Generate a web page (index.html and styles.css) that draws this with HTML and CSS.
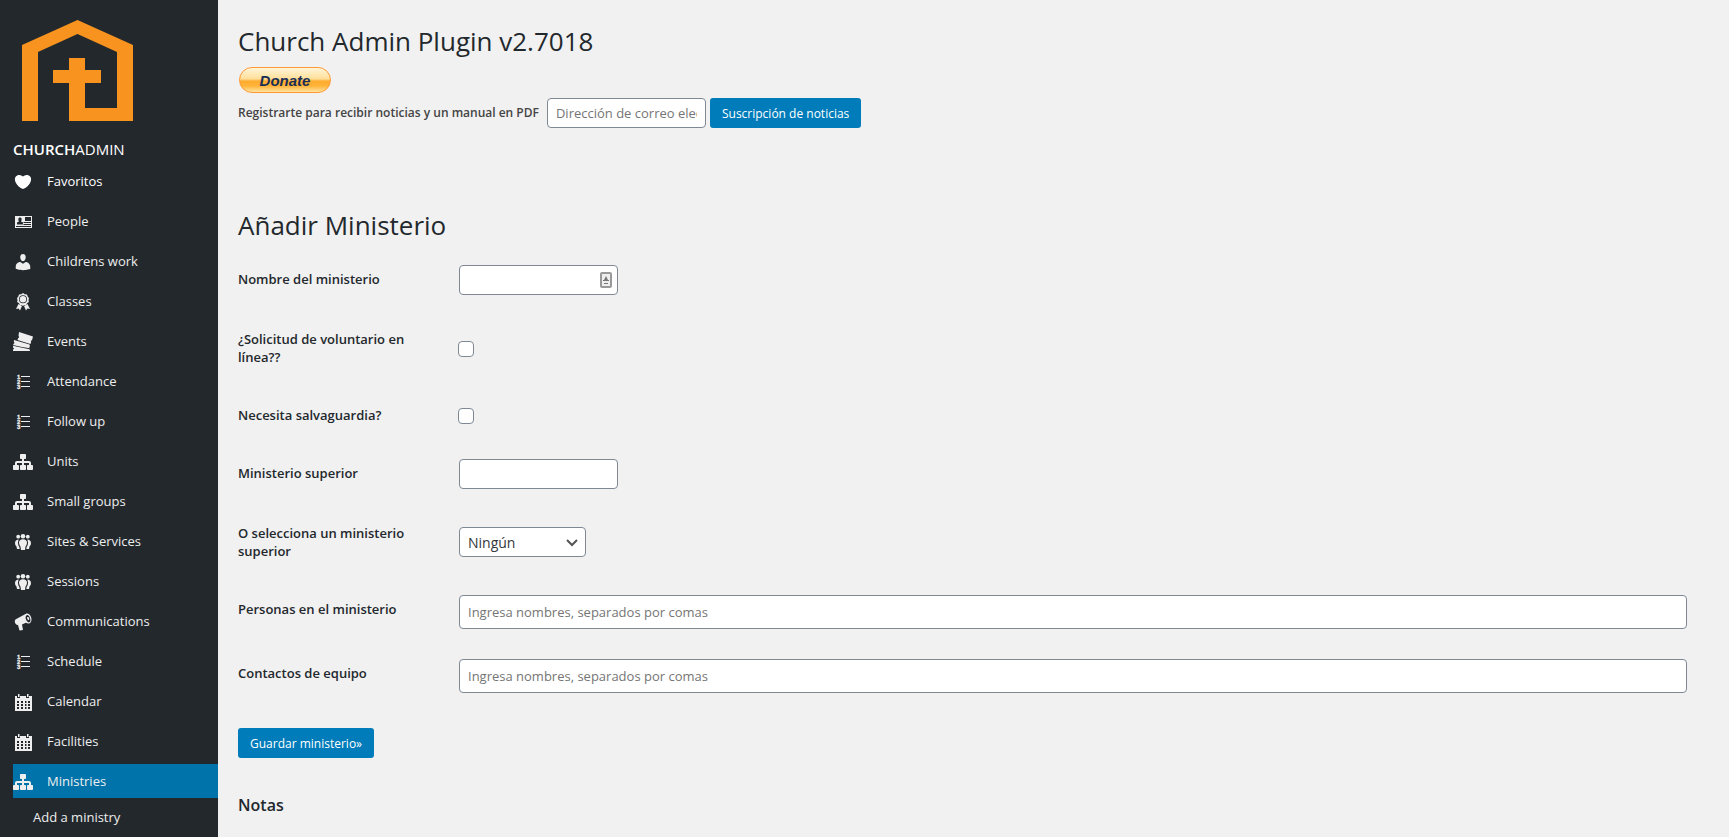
FILE: index.html
```html
<!DOCTYPE html>
<html lang="es">
<head>
    <meta charset="UTF-8">
    <meta name="viewport" content="width=device-width, initial-scale=1.0">
    <title>Church Admin - Añadir Ministerio</title>
    <link rel="stylesheet" href="styles.css">
</head>
<body>
    <!-- Icon set used by the menu -->
    <svg class="icon-set" aria-hidden="true">
        <symbol id="heart" viewBox="0 0 20 20">
            <path d="M10 17.12c3.33-1.4 5.74-3.79 7.04-6.21 1.28-2.41 1.46-4.81.32-6.25-1.03-1.29-2.37-1.78-3.73-1.74s-2.68.63-3.63 1.46c-.95-.83-2.27-1.42-3.63-1.46s-2.7.45-3.73 1.74c-1.14 1.44-.96 3.84.34 6.25 1.28 2.42 3.69 4.81 7.02 6.21z"/>
        </symbol>
        <symbol id="card" viewBox="0 0 20 20">
            <path fill-rule="evenodd" d="M2 4h17v12H2zM4 10.500v2h6v-2l-2-1c1-1.500 1-4-1-4s-2 2.500-1 4zM12 5v4h6V5zM10.500 10v1H18v-1zM10.500 12v1H18v-1zM3 14v1h15v-1z"/>
        </symbol>
        <symbol id="user" viewBox="0 0 20 20">
            <path d="M10 9.250c-2.270 0-2.730-3.440-2.730-3.440C7 4.020 7.820 2 9.970 2c2.160 0 2.980 2.020 2.710 3.810 0 0-.41 3.440-2.680 3.440zm0 2.570L12.720 10c2.390 0 4.520 2.330 4.520 4.530v2.490s-3.650 1.130-7.240 1.130c-3.650 0-7.240-1.130-7.240-1.130v-2.490c0-2.250 1.940-4.480 4.470-4.480z"/>
        </symbol>
        <symbol id="award" viewBox="0 0 20 20">
            <path fill-rule="evenodd" d="M10 1l1.800 1.200 2.200.2.700 2L16 6.200 15.500 8l.3 2-1.800 1.300-1 1.700-2 .2-1 .8-1-.8-2-.2-1-1.700L4.200 10l.3-2L4 6.200l1.300-1.800.7-2 2.200-.2zM10 3.300a4 4 0 1 0 0 8 4 4 0 0 0 0-8z"/>
            <circle cx="10" cy="7.300" r="3.200"/>
            <path d="M5.500 12l-2.500 5 2.600-.5L7 18.500l2-4.500zM14.500 12l2.500 5-2.600-.5-1.400 2-2-4.500z"/>
        </symbol>
        <symbol id="tickets" viewBox="0 0 20 20">
            <path d="M6 0l14 4.500-1 3.700c-1 0-1.500 1-.8 1.900l-.8 2L4.500 8l.7-2c1 0 1.300-1.300.3-2z"/>
            <path d="M1 8l3.500.9 12 3.700.5 1.700c-1 .5-1 1.500 0 2L9 14.900 0 13l.7-1.300c1-.5.900-1.500.1-2z"/>
            <path d="M0 13.800l8 1.800 8.500 1.700.5 1.700H0v-1.500c1 0 1.300-1.500 0-2z"/>
        </symbol>
        <symbol id="list" viewBox="0 0 20 20">
            <path d="M8 4h9v1H8zM8 9h9v1H8zM8 14h9v1H8z"/>
            <g font-family="Liberation Sans, sans-serif" font-size="6" font-weight="bold" stroke="currentColor" stroke-width=".3">
                <text x="4" y="7">1</text>
                <text x="4" y="12">2</text>
                <text x="4" y="17">3</text>
            </g>
        </symbol>
        <symbol id="network" viewBox="0 0 20 20">
            <path d="M18 13h1c.55 0 1 .45 1 1.010v2.980c0 .56-.45 1.010-1 1.010h-4c-.55 0-1-.45-1-1.010v-2.980c0-.56.45-1.010 1-1.010h1v-2h-5v2h1c.55 0 1 .45 1 1.010v2.980c0 .56-.45 1.010-1 1.010H8c-.55 0-1-.45-1-1.010v-2.980c0-.56.45-1.010 1-1.010h1v-2H4v2h1c.55 0 1 .45 1 1.010v2.980C6 17.550 5.550 18 5 18H1c-.55 0-1-.45-1-1.010v-2.980C0 13.450.45 13 1 13h1v-2c0-1.100.9-2 2-2h5V7H8c-.55 0-1-.45-1-1.010V3.010C7 2.450 7.450 2 8 2h4c.55 0 1 .45 1 1.010v2.980C13 6.550 12.550 7 12 7h-1v2h5c1.100 0 2 .9 2 2v2z"/>
        </symbol>
        <symbol id="groups" viewBox="0 0 20 20">
            <circle cx="5.200" cy="4.700" r="1.900"/>
            <circle cx="14.800" cy="4.700" r="1.900"/>
            <circle cx="10" cy="4.300" r="2.300"/>
            <path d="M10 7.300c2.500 0 4 1.300 4 3.300 0 2-.8 3-1.500 3.800L12 18H8l-.5-3.600C6.800 13.600 6 12.600 6 10.600c0-2 1.500-3.300 4-3.300z"/>
            <path d="M5.800 7.400C3.500 7.400 2 8.800 2 11c0 1.800.8 2.800 1.500 3.400L4 17h2.700l-.4-2.200C5.500 13.800 5 12.500 5 11c0-1.500.3-2.500.8-3.600zM14.200 7.400C16.500 7.400 18 8.800 18 11c0 1.800-.8 2.800-1.500 3.400L16 17h-2.700l.4-2.200c.8-1 1.300-2.300 1.300-3.800 0-1.500-.3-2.500-.8-3.600z"/>
        </symbol>
        <symbol id="megaphone" viewBox="0 0 20 20">
            <path fill-rule="evenodd" d="M13 1.800c2-.8 4 .5 5 3.200s.5 5.500-1.300 6.300c-1.200.5-2.700.1-3.800-.5L9 12.500l1 5.500-3.500.5-1.500-5.500c-1.500.2-2.500-.9-3-2.200-.6-1.600 0-3.100 1.300-3.700zM13.700 3.200c-1.200.5-1.400 2.500-.7 4.400s2.200 3.200 3.400 2.700 1.300-2.500.6-4.400-2.200-3.200-3.300-2.700z"/>
            <path d="M14 5.200c.9-.3 1.900.2 2.200 1.100s-.1 1.700-1 2c-.8-1-1.200-2-1.200-3.100z"/>
        </symbol>
        <symbol id="calendar" viewBox="0 0 20 20">
            <path fill-rule="evenodd" d="M2 4h2v2h3V4h6v2h3V4h3v15H2zM4 9v2h2V9zM8 9v2h2V9zM12 9v2h1.500V9zM15 9v2h2V9zM4 12v2h2v-2zM8 12v2h2v-2zM12 12v2h1.500v-2zM15 12v2h2v-2zM4 15v2h2v-2zM8 15v2h2v-2zM12 15v2h1.500v-2zM15 15v2h2v-2z"/>
            <path d="M5 2h1.500v3H5zM14 2h1.500v3H14z"/>
        </symbol>
    </svg>

    <div class="layout">
        <aside class="sidebar">
            <svg class="logo" viewBox="0 0 111 101" role="img" aria-label="Church Admin">
                <path d="M0 101V25L55.500 0 111 25v76H47V63H31V50h16V38h16v12h16v13H63v25h32V32L55.500 14 16 32v69z"/>
            </svg>
            <div class="brand"><span class="brand-strong">CHURCH</span>ADMIN</div>
            <nav>
                <ul class="menu">
                    <li><a href="#" class="menu-item bright"><svg class="icon"><use href="#heart"/></svg>Favoritos</a></li>
                    <li><a href="#" class="menu-item"><svg class="icon"><use href="#card"/></svg>People</a></li>
                    <li><a href="#" class="menu-item"><svg class="icon"><use href="#user"/></svg>Childrens work</a></li>
                    <li><a href="#" class="menu-item"><svg class="icon"><use href="#award"/></svg>Classes</a></li>
                    <li><a href="#" class="menu-item"><svg class="icon"><use href="#tickets"/></svg>Events</a></li>
                    <li><a href="#" class="menu-item"><svg class="icon"><use href="#list"/></svg>Attendance</a></li>
                    <li><a href="#" class="menu-item"><svg class="icon"><use href="#list"/></svg>Follow up</a></li>
                    <li><a href="#" class="menu-item"><svg class="icon"><use href="#network"/></svg>Units</a></li>
                    <li><a href="#" class="menu-item"><svg class="icon"><use href="#network"/></svg>Small groups</a></li>
                    <li><a href="#" class="menu-item"><svg class="icon"><use href="#groups"/></svg>Sites &amp; Services</a></li>
                    <li><a href="#" class="menu-item"><svg class="icon"><use href="#groups"/></svg>Sessions</a></li>
                    <li><a href="#" class="menu-item"><svg class="icon"><use href="#megaphone"/></svg>Communications</a></li>
                    <li><a href="#" class="menu-item"><svg class="icon"><use href="#list"/></svg>Schedule</a></li>
                    <li><a href="#" class="menu-item"><svg class="icon"><use href="#calendar"/></svg>Calendar</a></li>
                    <li><a href="#" class="menu-item"><svg class="icon"><use href="#calendar"/></svg>Facilities</a></li>
                    <li><a href="#" class="menu-item active"><svg class="icon"><use href="#network"/></svg>Ministries</a></li>
                </ul>
                <a href="#" class="submenu-item">Add a ministry</a>
            </nav>
        </aside>

        <main class="content">
            <h1>Church Admin Plugin v2.7018</h1>
            <button type="button" class="donate">Donate</button>
            <form class="newsletter">
                <label for="email">Registrarte para recibir noticias y un manual en PDF</label>
                <input type="email" id="email" class="input" placeholder="Dirección de correo electrónico">
                <button type="submit" class="button">Suscripción de noticias</button>
            </form>

            <h2>Añadir Ministerio</h2>
            <form class="ministry-form">
                <div class="row">
                    <label for="name">Nombre del ministerio</label>
                    <div class="field">
                        <div class="autofill">
                            <input type="text" id="name" class="input">
                            <svg class="autofill-icon" viewBox="0 0 12 16" aria-hidden="true">
                                <rect x="1" y="1" width="10" height="14" rx="1" fill="#eee" stroke="#999" stroke-width="2"/>
                                <path d="M6 4l2 4H4zM3 8h6v1H3zM4 11h4v1H4z" fill="#777"/>
                            </svg>
                        </div>
                    </div>
                </div>
                <div class="row">
                    <label for="volunteer">¿Solicitud de voluntario en línea??</label>
                    <div class="field"><input type="checkbox" id="volunteer" class="checkbox"></div>
                </div>
                <div class="row">
                    <label for="safeguarding">Necesita salvaguardia?</label>
                    <div class="field"><input type="checkbox" id="safeguarding" class="checkbox"></div>
                </div>
                <div class="row">
                    <label for="parent">Ministerio superior</label>
                    <div class="field"><input type="text" id="parent" class="input"></div>
                </div>
                <div class="row">
                    <label for="parent-id">O selecciona un ministerio superior</label>
                    <div class="field">
                        <div class="select-wrap">
                            <select id="parent-id" class="input select">
                                <option>Ningún</option>
                            </select>
                            <svg class="chevron" viewBox="0 0 12 8" aria-hidden="true"><path d="M1 1l5 5 5-5"/></svg>
                        </div>
                    </div>
                </div>
                <div class="row">
                    <label for="people">Personas en el ministerio</label>
                    <div class="field"><input type="text" id="people" class="input wide" placeholder="Ingresa nombres, separados por comas"></div>
                </div>
                <div class="row">
                    <label for="contacts">Contactos de equipo</label>
                    <div class="field"><input type="text" id="contacts" class="input wide" placeholder="Ingresa nombres, separados por comas"></div>
                </div>
                <button type="submit" class="button save">Guardar ministerio»</button>
            </form>
            <h3>Notas</h3>
        </main>
    </div>
</body>
</html>
```

FILE: styles.css
```css
* {
    box-sizing: border-box;
}
body {
    margin: 0;
    background-color: #f1f1f1;
    color: #444;
    font-family: "Open Sans", "Noto Sans", sans-serif;
    font-size: 13px;
    line-height: 18px;
}
input, select, button {
    font-family: inherit;
}
.icon-set {
    display: none;
}
.layout {
    display: flex;
    min-height: 100vh;
}

/* Sidebar */
.sidebar {
    flex: 0 0 218px;
    padding: 20px 0 0 13px;
    background-color: #23282d;
    color: #fff;
}
.logo {
    display: block;
    width: 111px;
    height: 101px;
    margin-left: 9px;
    fill: #f7931e;
}
.brand {
    margin-top: 18px;
    font-size: 15px;
    line-height: 20px;
}
.brand-strong {
    font-weight: 600;
}
.menu {
    display: flex;
    flex-direction: column;
    gap: 6px;
    margin: 5px 0 0;
    padding: 0;
    list-style: none;
}
.menu-item {
    display: flex;
    align-items: center;
    gap: 14px;
    height: 34px;
    color: #eee;
    text-decoration: none;
}
.menu-item.bright {
    color: #fff;
}
.menu-item.active {
    background-color: #0073aa;
}
.icon {
    width: 20px;
    height: 20px;
    margin-top: 2px;
    fill: currentColor;
}
.submenu-item {
    display: block;
    padding: 10px 0 0 20px;
    color: #eee;
    text-decoration: none;
}

/* Main content */
.content {
    flex: 1;
    padding: 25px 32px 0 20px;
}
h1, h2 {
    margin: 0;
    color: #23282d;
    font-size: 26px;
    font-weight: 400;
    line-height: 32px;
}
h2 {
    margin-top: 81px;
}
h3 {
    margin: 38px 0 0;
    color: #23282d;
    font-size: 16px;
    font-weight: 600;
}
.donate {
    display: block;
    width: 92px;
    height: 26px;
    margin: 10px 0 5px 1px;
    padding: 0;
    border: 1px solid #ff9933;
    border-radius: 13px;
    background: linear-gradient(#fff5d8, #ffdf9a 45%, #ffab2e 55%, #ffb53a 75%, #ffe3a0);
    color: #1b2f55;
    font-family: "Liberation Sans", Arial, sans-serif;
    font-size: 15px;
    font-style: italic;
    font-weight: bold;
}
.newsletter {
    display: flex;
    align-items: center;
    gap: 4px;
}
.newsletter label {
    margin-right: 4px;
    font-size: 12px;
    font-weight: 600;
}
.input {
    width: 159px;
    height: 30px;
    padding: 0 8px;
    border: 1px solid #7e8993;
    border-radius: 4px;
    background-color: #fff;
    color: #32373c;
    font-size: 13px;
}
.input::placeholder {
    color: #757575;
}
.input.wide {
    width: 100%;
    height: 34px;
}
.button {
    height: 30px;
    padding: 0 12px;
    border: none;
    border-radius: 3px;
    background-color: #007cba;
    color: #fff;
    font-size: 12px;
}

/* Ministry form */
.ministry-form {
    margin-top: 9px;
}
.row {
    display: grid;
    grid-template-columns: 211px 1fr;
}
.row label {
    padding: 20px 30px 20px 0;
    color: #23282d;
    font-weight: 600;
}
.field {
    display: flex;
    align-items: center;
    padding: 15px 10px;
}
.checkbox {
    appearance: none;
    width: 16px;
    height: 16px;
    margin: 2px 0 0 -1px;
    border: 1px solid #7e8993;
    border-radius: 4px;
    background-color: #fff;
}
.autofill, .select-wrap {
    display: flex;
    position: relative;
}
.autofill-icon {
    position: absolute;
    top: 7px;
    right: 6px;
    width: 12px;
    height: 16px;
}
.select {
    appearance: none;
    width: 127px;
    font-size: 14px;
}
.chevron {
    position: absolute;
    top: 12px;
    right: 8px;
    width: 12px;
    height: 8px;
    fill: none;
    stroke: #555;
    stroke-width: 2;
    pointer-events: none;
}
.save {
    margin-top: 20px;
}
```
